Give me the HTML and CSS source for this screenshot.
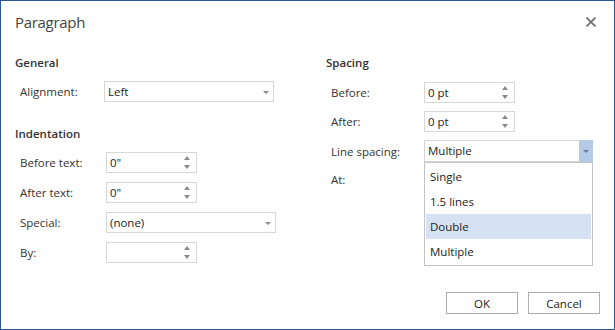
FILE: index.html
```html
<!DOCTYPE html>
<html lang="en">
  <head>
    <meta charset="utf-8" />
    <title>Paragraph</title>
    <link rel="stylesheet" href="styles.css">
  </head>
  <body>
    <div class="dialog">
      <div class="titlebar">
        <span class="title">Paragraph</span>
        <svg class="close" width="10" height="10" viewBox="0 0 10 10">
          <path d="M0.5 0.5 L9.5 9.5 M9.5 0.5 L0.5 9.5" stroke="#6b6b6b" stroke-width="1.6"/>
        </svg>
      </div>
      <div class="content">
        <div class="col leftcol">
          <div class="heading">General</div>
          <div class="rows">
            <div class="row">
              <label class="lbl">Alignment:</label>
              <div class="field select wide shift">Left<span class="arrow"></span></div>
            </div>
          </div>
          <div class="heading gap">Indentation</div>
          <div class="rows">
            <div class="row">
              <label class="lbl">Before text:</label>
              <div class="field spin">0"<span class="spinarrows"><i class="up"></i><i class="down"></i></span></div>
            </div>
            <div class="row">
              <label class="lbl">After text:</label>
              <div class="field spin">0"<span class="spinarrows"><i class="up"></i><i class="down"></i></span></div>
            </div>
            <div class="row">
              <label class="lbl">Special:</label>
              <div class="field select wide">(none)<span class="arrow"></span></div>
            </div>
            <div class="row">
              <label class="lbl">By:</label>
              <div class="field spin"><span class="spinarrows"><i class="up"></i><i class="down"></i></span></div>
            </div>
          </div>
        </div>
        <div class="col rightcol">
          <div class="heading">Spacing</div>
          <div class="rows">
            <div class="row">
              <label class="lbl">Before:</label>
              <div class="field spin">0 pt<span class="spinarrows"><i class="up"></i><i class="down"></i></span></div>
            </div>
            <div class="row">
              <label class="lbl">After:</label>
              <div class="field spin">0 pt<span class="spinarrows"><i class="up"></i><i class="down"></i></span></div>
            </div>
            <div class="row">
              <label class="lbl">Line spacing:</label>
              <div class="field select wide open">Multiple<span class="arrow active"></span>
                <ul class="droplist">
                  <li>Single</li>
                  <li>1.5 lines</li>
                  <li class="hover">Double</li>
                  <li>Multiple</li>
                </ul>
              </div>
            </div>
            <div class="row">
              <label class="lbl">At:</label>
              <div class="field spin"></div>
            </div>
          </div>
        </div>
      </div>
      <div class="footer">
        <button type="button" class="btn">OK</button>
        <button type="button" class="btn">Cancel</button>
      </div>
    </div>
  </body>
</html>
```

FILE: styles.css
```css
html, body {
  margin: 0;
  padding: 0;
  background: #fff;
}
body {
  font-family: "Open Sans", "Noto Sans", sans-serif;
  font-size: 11.5px;
  color: #333;
}
.dialog {
  width: 615px;
  height: 330px;
  box-sizing: border-box;
  border: 1px solid #2b579a;
  display: flex;
  flex-direction: column;
}
.titlebar {
  height: 42px;
  display: flex;
  align-items: center;
  justify-content: space-between;
  padding: 0 18px 0 14px;
}
.title {
  font-size: 15px;
  letter-spacing: -0.3px;
  color: #444;
}
.close {
  display: block;
}
.content {
  display: flex;
  padding: 12px 0 0 14px;
}
.leftcol {
  width: 311px;
}
.rightcol {
  flex: 1;
}
.heading {
  font-weight: 600;
  line-height: 16px;
  height: 16px;
  color: #333;
}
.heading.gap {
  margin-top: 24px;
}
.rows {
  display: flex;
  flex-direction: column;
  gap: 9px;
  margin-top: 10px;
  margin-left: 5px;
}
.rightcol .rows {
  gap: 8px;
  margin-top: 11px;
}
.row {
  display: grid;
  grid-template-columns: 86px auto;
  align-items: center;
  height: 21px;
}
.rightcol .row {
  grid-template-columns: 93px auto;
}
.lbl {
  color: #333;
}
.field {
  position: relative;
  box-sizing: border-box;
  height: 21px;
  border: 1px solid #d6d6d6;
  background: #fff;
  padding: 0 0 0 3px;
  line-height: 19px;
  color: #222;
  width: 91px;
}
.field.wide {
  width: 170px;
}
.field.shift {
  margin-left: -2px;
}
.rightcol .field.wide {
  width: 169px;
  height: 22px;
}
.arrow {
  position: absolute;
  top: 0;
  right: 0;
  width: 14px;
  height: 100%;
}
.arrow::after {
  content: "";
  position: absolute;
  left: 4px;
  top: 9px;
  border-left: 3px solid transparent;
  border-right: 3px solid transparent;
  border-top: 3px solid #8a8a8a;
}
.arrow.active {
  background: #b4cae6;
  top: -1px;
  right: -1px;
  height: 22px;
  width: 14px;
}
.arrow.active::after {
  border-top-color: #6e7f96;
  top: 10px;
}
.spinarrows {
  position: absolute;
  right: 6px;
  top: 3px;
  display: flex;
  flex-direction: column;
  gap: 5px;
}
.spinarrows i {
  display: block;
  width: 0;
  height: 0;
  border-left: 3px solid transparent;
  border-right: 3px solid transparent;
}
.spinarrows .up {
  border-bottom: 4px solid #8a8a8a;
}
.spinarrows .down {
  border-top: 4px solid #8a8a8a;
}
.droplist {
  position: absolute;
  left: -1px;
  top: 21px;
  width: 169px;
  box-sizing: border-box;
  margin: 0;
  padding: 1px;
  list-style: none;
  background: #fff;
  border: 1px solid #c4c4c4;
  z-index: 2;
}
.droplist li {
  height: 25px;
  line-height: 25px;
  padding-left: 4px;
  color: #222;
}
.droplist li.hover {
  background: #d6e2f3;
}
.footer {
  margin-top: auto;
  display: flex;
  justify-content: flex-end;
  gap: 10px;
  padding: 0 14px 15px 0;
}
.btn {
  width: 72px;
  height: 22px;
  box-sizing: border-box;
  border: 1px solid #adadad;
  background: #fff;
  font-family: inherit;
  font-size: 11.5px;
  color: #222;
  padding: 0;
}
```
